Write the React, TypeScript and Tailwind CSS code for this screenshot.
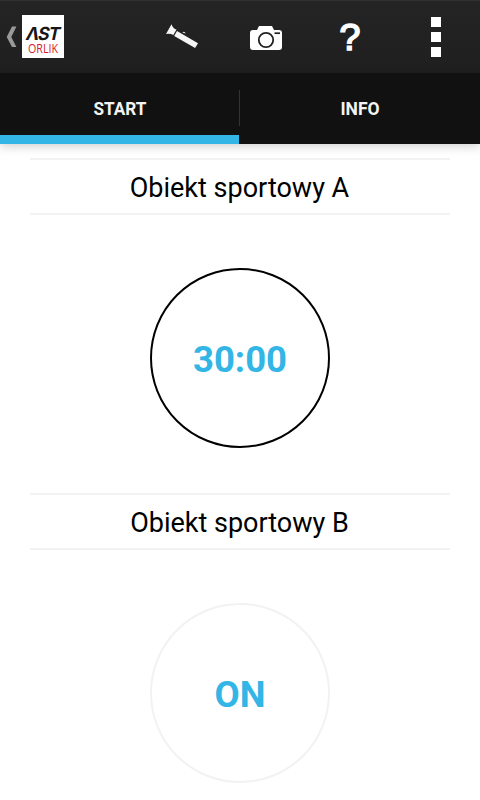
import React from 'react';

function Logo() {
  return (
    <svg className="ml-[3px] h-[42px] w-[42px] shrink-0 overflow-visible" viewBox="0 0 42 42" role="img" aria-label="AST Orlik">
      <rect y="-1" width="42" height="43" fill="#fff" />
      <text transform="translate(3 23.6) skewX(-12)" fontFamily="Inter, sans-serif" fontWeight="700" fontSize="18" letterSpacing="-1.2" textLength="33" lengthAdjust="spacingAndGlyphs" fill="#171717">ΛST</text>
      <text x="6" y="37.4" fontFamily="'Open Sans', sans-serif" fontSize="12.5" textLength="30" lengthAdjust="spacingAndGlyphs" fill="#d8201f">ORLIK</text>
    </svg>
  );
}

function Header() {
  return (
    <header className="flex h-[73px] items-start border-t border-[#303030] bg-linear-to-b from-[#242424] to-[#1f1f1f]">
      <button className="flex h-[71px] w-[67px] shrink-0 items-center pl-[6px]" aria-label="Back">
        <svg className="h-[22px] w-[13px] shrink-0" viewBox="0 0 13 22">
          <path d="M6 0.5h4.4L5.3 11l5.1 10H6L0.7 11z" fill="#999" />
        </svg>
        <Logo />
      </button>
      <button className="ml-[73px] flex h-[71px] w-[84px] shrink-0 items-center justify-center" aria-label="Flashlight">
        <svg className="h-[28px] w-[34px]" viewBox="0 0 34 28">
          <path d="M6.5 1.2L1 10.9q4.5-.7 7.3 1.2l3.2-5.5Q8 5.5 6.5 1.2z" fill="#f5f5f5" />
          <path d="M12 8.1L33 20.2l-2.9 4.9L9.2 13z" fill="#f5f5f5" />
          <path d="M17.4 9.4q2-1.6 3.3 1z" fill="#f5f5f5" />
        </svg>
      </button>
      <button className="flex h-[71px] w-[84px] shrink-0 items-center justify-center" aria-label="Camera">
        <svg className="mt-[2px] h-[24px] w-[32px]" viewBox="0 0 32 24">
          <path d="M3 4h4l2-4h13l2 4h5q3 0 3 3v14q0 3-3 3H3q-3 0-3-3V7q0-3 3-3z" fill="#fff" />
          <circle cx="16" cy="14" r="7.2" fill="none" stroke="#222" strokeWidth="1.8" />
          <path d="M24.5 7.2H30" stroke="#222" strokeWidth="1.7" />
        </svg>
      </button>
      <button className="flex h-[71px] w-[84px] shrink-0 items-center justify-center" aria-label="Help">
        <svg className="h-[44px] w-[32px]" viewBox="0 0 32 44">
          <text x="16" y="34.7" textAnchor="middle" fontFamily="'Liberation Sans', sans-serif" fontSize="37.5" fill="#fff" stroke="#fff" strokeWidth="1.7">?</text>
        </svg>
      </button>
      <button className="flex h-[71px] w-[88px] shrink-0 flex-col items-center justify-center gap-[5px]" aria-label="More options">
        <span className="h-[10px] w-[10px] bg-white" />
        <span className="h-[10px] w-[10px] bg-white" />
        <span className="h-[10px] w-[10px] bg-white" />
      </button>
    </header>
  );
}

function Tabs() {
  return (
    <nav className="flex h-[71px] bg-[#111] text-[17.5px] font-bold text-[#f3f3f3] shadow-[0_2px_10px_rgba(0,0,0,0.2)]">
      <button className="h-full w-[239px] border-b-[9px] border-[#33b5e5] pt-[10px]">
        <span className="ml-[1px] inline-block scale-x-[0.98]">START</span>
      </button>
      <span className="mt-[17px] h-[36px] w-px bg-[#333]" />
      <button className="h-full w-[240px] border-b-[9px] border-[#111] pt-[10px]">
        <span className="inline-block">INFO</span>
      </button>
    </nav>
  );
}

function Facility({ name, status, active = false }: { name: string; status: string; active?: boolean }) {
  return (
    <section className="flex h-[335px] flex-col items-center">
      <h2 className="flex h-[57px] w-[420px] items-center justify-center border-y-2 border-[#f2f2f2] pt-[4px] pr-[1px] text-[27px] text-black">{name}</h2>
      <button
        className={`mt-[53px] flex h-[180px] w-[180px] shrink-0 items-center justify-center rounded-full border-2 pt-[4px] text-[36.5px] font-bold text-[#33b5e5] ${active ? 'border-black' : 'border-[#f2f2f2]'}`}
      >
        {status}
      </button>
    </section>
  );
}

export default function App() {
  return (
    <div className="h-[800px] w-[480px] overflow-hidden bg-white font-['Roboto',sans-serif]">
      <Header />
      <Tabs />
      <main className="pt-[14px]">
        <Facility name="Obiekt sportowy A" status="30:00" active />
        <Facility name="Obiekt sportowy B" status="ON" />
      </main>
    </div>
  );
}
